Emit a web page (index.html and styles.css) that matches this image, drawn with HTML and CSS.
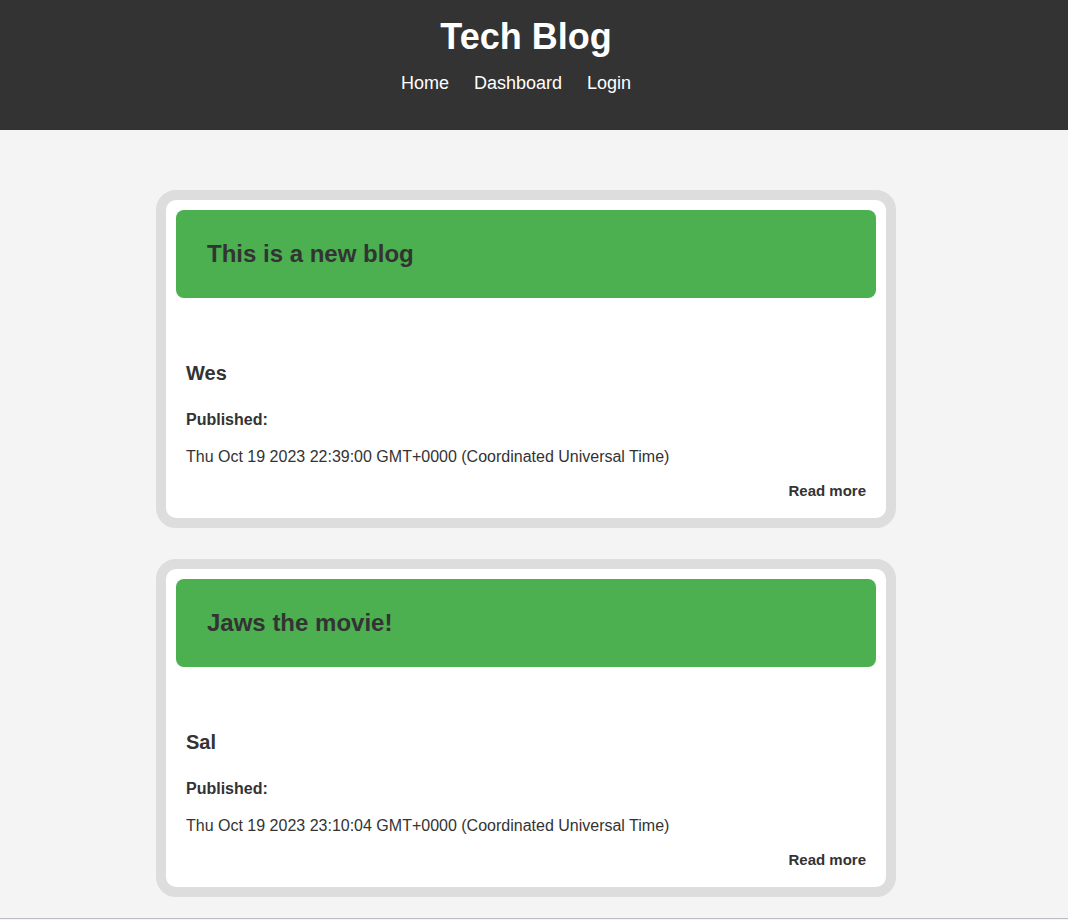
FILE: index.html
```html
<!DOCTYPE html>
<html lang="en">
<head>
<meta charset="utf-8">
<title>Tech Blog</title>
<link rel="stylesheet" href="styles.css">
</head>
<body>
<header class="site-header">
  <h1 class="site-title">Tech Blog</h1>
  <nav class="site-nav">
    <a href="#" class="nav-link">Home</a>
    <a href="#" class="nav-link">Dashboard</a>
    <a href="#" class="nav-link">Login</a>
  </nav>
</header>
<main class="main">
  <article class="post">
    <div class="post-head"><h2 class="post-title">This is a new blog</h2></div>
    <div class="post-body">
      <h3 class="post-author">Wes</h3>
      <p class="post-label">Published:</p>
      <p class="post-date">Thu Oct 19 2023 22:39:00 GMT+0000 (Coordinated Universal Time)</p>
      <div class="post-more"><a href="#" class="more-link">Read more</a></div>
    </div>
  </article>
  <article class="post">
    <div class="post-head"><h2 class="post-title">Jaws the movie!</h2></div>
    <div class="post-body">
      <h3 class="post-author">Sal</h3>
      <p class="post-label">Published:</p>
      <p class="post-date">Thu Oct 19 2023 23:10:04 GMT+0000 (Coordinated Universal Time)</p>
      <div class="post-more"><a href="#" class="more-link">Read more</a></div>
    </div>
  </article>
</main>
<footer class="site-footer"></footer>
</body>
</html>
```
FILE: styles.css
```css
* { box-sizing: border-box; }
html, body {
  margin: 0;
  padding: 0;
}
body {
  background: #f4f4f4;
  color: #333;
  font-family: "Liberation Sans", Arial, sans-serif;
}
.site-header {
  background: #333;
  color: #fff;
  padding: 16px 16px 36px 0;
  text-align: center;
}
.site-title {
  margin: 0 0 16px;
  font-size: 36px;
  line-height: 41px;
  font-weight: bold;
}
.site-nav {
  display: flex;
  justify-content: center;
  gap: 5px;
  line-height: 21px;
}
.nav-link {
  color: #fff;
  text-decoration: none;
  font-size: 18px;
  margin-right: 20px;
}
.main {
  padding: 60px 16px 0 0;
}
.post {
  width: 740px;
  margin: 0 auto 31px;
  background: #fff;
  border: 10px solid #ddd;
  border-radius: 20px;
  padding: 10px 10px 0;
}
.post:last-child { margin-bottom: 21px; }
.post-head {
  background: #4caf50;
  border-radius: 8px;
  padding: 30px 31px;
}
.post-title {
  margin: 0;
  font-size: 24px;
  line-height: 28px;
  color: #333;
}
.post-body {
  padding: 0 10px 19px;
}
.post-author {
  margin: 64px 0 25px;
  font-size: 20px;
  line-height: 23px;
}
.post-label {
  margin: 0 0 18px;
  font-size: 16px;
  line-height: 19px;
  font-weight: bold;
}
.post-date {
  margin: 0 0 16px;
  font-size: 16px;
  line-height: 19px;
}
.post-more {
  text-align: right;
  line-height: 17px;
}
.more-link {
  color: #333;
  font-weight: bold;
  font-size: 15px;
  text-decoration: none;
}
.site-footer {
  border-top: 1px solid #bcbcc4;
  height: 40px;
}
```
